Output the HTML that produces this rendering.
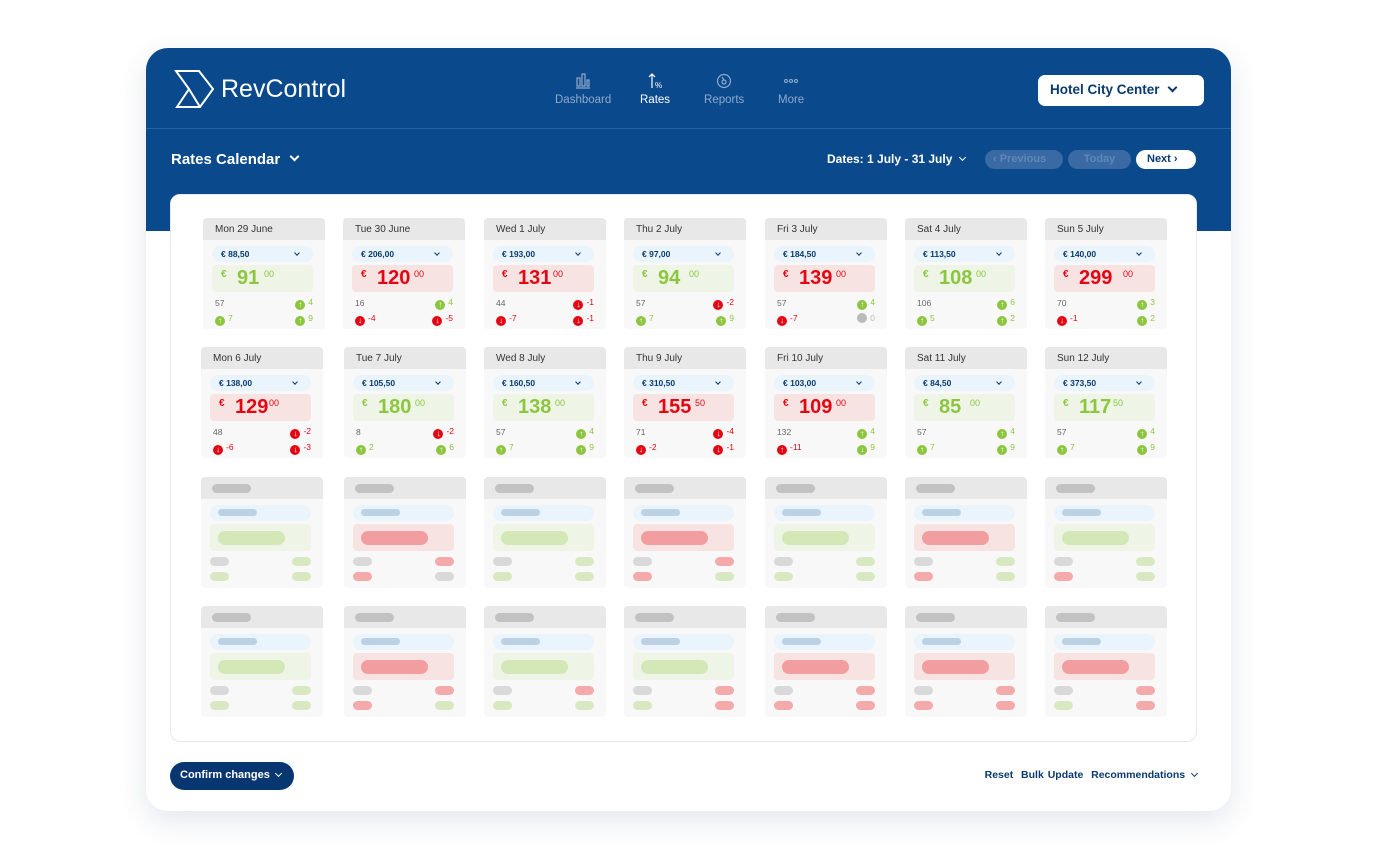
<!DOCTYPE html>
<html><head><meta charset="utf-8"><style>
*{box-sizing:border-box;margin:0;padding:0}
body{width:1376px;height:861px;background:#fff;font-family:"Liberation Sans",sans-serif;position:relative;overflow:hidden}
.frame{position:absolute;left:146px;top:48px;width:1085px;height:763px;border-radius:22px;background:#fff;box-shadow:0 10px 30px rgba(30,50,90,.12);overflow:hidden}
.blue{position:absolute;left:0;top:0;width:100%;height:183px;background:#0a4a8c}
.divl{position:absolute;left:0;top:80px;width:100%;height:1px;background:#2a62a0}
.panel{position:absolute;left:24px;top:146px;width:1027px;height:548px;background:#fff;border-radius:10px;border:1px solid #e6e8ec}
.nav{position:absolute;top:24px;text-align:center;color:#8fa9cc;font-size:11.5px}
.nav.act{color:#fff}
.nav svg{display:block;margin:0 auto 5px}
.card{position:absolute;width:122px;height:111px;background:#f8f8f8;border-radius:4px;overflow:hidden}
.hd{height:22px;background:#e8e8e8;font-size:10px;color:#333;padding:6px 0 0 12px}
.dd{position:absolute;left:9px;top:28px;width:101px;height:16px;border-radius:8px;background:#eaf4fc;font-size:8.5px;color:#0a3a6e;padding:3px 0 0 9px;font-weight:bold}
.dd:after{content:"";position:absolute;right:14px;top:5px;width:3px;height:3px;border-right:1.3px solid #0a3a6e;border-bottom:1.3px solid #0a3a6e;transform:rotate(45deg)}
.pr{position:absolute;left:9px;top:47px;width:101px;height:27px;border-radius:4px;font-weight:bold}
.pg{background:#eef5e6;color:#8cc63f}.prr{background:#f8e3e3;color:#e30613}
.pr .e{position:absolute;left:9px;top:4px;font-size:10px}
.pr .n{position:absolute;left:25px;top:2px;font-size:20px}
.pr .c{position:absolute;top:4px;font-size:9px;font-weight:normal}
.s{position:absolute;font-size:8.5px;white-space:nowrap}
.s i{display:inline-block;width:10px;height:10px;border-radius:50%;color:#fff;font-style:normal;font-size:8px;text-align:center;line-height:10px;margin-right:3px;vertical-align:-2px;font-weight:bold}
.g{color:#8cc63f}.g i{background:#8cc63f}
.r{color:#e30613}.r i{background:#e30613}
.n0{color:#bbb}.n0 i{background:#bbb}
.l1{left:12px;top:80px;color:#666}.r1{right:12px;top:79px}.l2{left:12px;top:95px}.r2{right:12px;top:95px}
.ph .hb{position:absolute;left:11px;top:7px;width:39px;height:9px;border-radius:5px;background:#c2c2c2}
.ph .db{position:absolute;left:9px;top:28px;width:101px;height:16px;border-radius:8px;background:#eaf4fc}
.ph .db:after{content:"";position:absolute;left:8px;top:4px;width:39px;height:7px;border-radius:4px;background:#bcd2e4}
.ph .pb{position:absolute;left:9px;top:47px;width:101px;height:27px;border-radius:4px}
.ph .pb:after{content:"";position:absolute;left:8px;top:7px;width:67px;height:14px;border-radius:7px}
.ph .pg:after{background:#d4e7b7}.ph .prr:after{background:#f29ea0}
.ph b{position:absolute;width:19px;height:9px;border-radius:5px}
.b1{left:9px;top:80px}.b2{right:12px;top:80px}.b3{left:9px;top:95px}.b4{right:12px;top:95px}
.gy{background:#d9d9d9}.gr{background:#d8e9c2}.rd{background:#f4a9aa}
.chev{display:inline-block;width:7px;height:7px;border-right:2px solid;border-bottom:2px solid;transform:rotate(45deg)}
</style></head><body>
<div class="frame">
<div class="blue"></div>
<div class="divl"></div>
<svg style="position:absolute;left:28px;top:21px" width="42" height="40" viewBox="0 0 42 40" fill="none" stroke="#fff" stroke-width="2" stroke-linejoin="miter"><path d="M2 2H25L39 20L26 38H3L15 20Z"/><path d="M15 20L26 38"/></svg>
<div style="position:absolute;left:75px;top:27px;color:#fff;font-size:25px">RevControl</div>
<div class="nav" style="left:409px"><svg width="16" height="17" viewBox="0 0 16 17" fill="none" stroke="#8fa9cc" stroke-width="1.2"><rect x="2" y="6" width="3" height="8"/><rect x="7" y="2" width="3" height="12"/><rect x="12" y="8" width="2" height="6"/><path d="M1 16h14"/></svg>Dashboard</div>
<div class="nav act" style="left:494px"><svg width="16" height="17" viewBox="0 0 16 17" fill="none" stroke="#fff" stroke-width="1.2"><path d="M5 16V2M2 5l3-3 3 3"/><text x="8" y="16" font-size="8" fill="#fff" stroke="none">%</text></svg>Rates</div>
<div class="nav" style="left:558px"><svg width="16" height="17" viewBox="0 0 16 17" fill="none" stroke="#8fa9cc" stroke-width="1.2"><circle cx="8" cy="9" r="6.5"/><circle cx="8" cy="10" r="2"/><path d="M6 5l2 3"/></svg>Reports</div>
<div class="nav" style="left:632px"><svg width="16" height="17" viewBox="0 0 16 17" fill="none" stroke="#8fa9cc" stroke-width="1.1"><circle cx="3" cy="9" r="1.5"/><circle cx="8" cy="9" r="1.5"/><circle cx="13" cy="9" r="1.5"/></svg>More</div>
<div style="position:absolute;left:892px;top:27px;width:166px;height:31px;background:#fff;border-radius:7px;color:#0a3a6e;font-weight:bold;font-size:13.5px;padding:7px 0 0 12px">Hotel City Center <span class="chev" style="margin-left:6px;vertical-align:3px;color:#0a3a6e"></span></div>
<div style="position:absolute;left:25px;top:103px;color:#fff;font-size:15px;font-weight:bold">Rates Calendar <span class="chev" style="margin-left:7px;vertical-align:4px;color:#fff"></span></div>
<div style="position:absolute;left:681px;top:104px;color:#fff;font-size:12px;font-weight:bold">Dates: 1 July - 31 July <span class="chev" style="width:5px;height:5px;border-width:1.5px;margin-left:4px;vertical-align:3px"></span></div>
<div style="position:absolute;left:839px;top:102px;width:78px;height:19px;border-radius:10px;background:#3a6aa4;color:#5f87b8;font-size:11px;font-weight:bold;padding:3px 0 0 8px">‹ Previous</div>
<div style="position:absolute;left:922px;top:102px;width:63px;height:19px;border-radius:10px;background:#3a6aa4;color:#5f87b8;font-size:11px;font-weight:bold;text-align:center;padding-top:3px">Today</div>
<div style="position:absolute;left:990px;top:102px;width:60px;height:19px;border-radius:10px;background:#fff;color:#0a3a6e;font-size:11px;font-weight:bold;padding:3px 0 0 11px">Next ›</div>
<div class="panel"></div>
<div style="position:absolute;left:24px;top:714px;width:124px;height:28px;border-radius:14px;background:#073670;color:#fff;font-size:11px;font-weight:bold;padding:7px 0 0 10px">Confirm changes <span class="chev" style="width:5px;height:5px;border-width:1.5px;margin-left:3px;vertical-align:2px"></span></div>
<div style="position:absolute;right:34px;top:721px;color:#0a3a6e;font-size:10.5px;font-weight:bold;word-spacing:1px">Reset&nbsp; Bulk Update&nbsp; Recommendations <span class="chev" style="width:5px;height:5px;border-width:1.5px;margin-left:3px;vertical-align:2px"></span></div>
</div>

<!-- row 1 -->
<div class="card" style="left:203px;top:218px"><div class="hd">Mon 29 June</div><div class="dd">€ 88,50</div><div class="pr pg"><span class="e">€</span><span class="n">91</span><span class="c" style="left:52px">00</span></div><span class="s l1">57</span><span class="s g r1"><i>↑</i>4</span><span class="s g l2"><i>↑</i>7</span><span class="s g r2"><i>↑</i>9</span></div>
<div class="card" style="left:343px;top:218px"><div class="hd">Tue 30 June</div><div class="dd">€ 206,00</div><div class="pr prr"><span class="e">€</span><span class="n">120</span><span class="c" style="left:62px">00</span></div><span class="s l1">16</span><span class="s g r1"><i>↑</i>4</span><span class="s r l2"><i>↓</i>-4</span><span class="s r r2"><i>↓</i>-5</span></div>
<div class="card" style="left:484px;top:218px"><div class="hd">Wed 1 July</div><div class="dd">€ 193,00</div><div class="pr prr"><span class="e">€</span><span class="n">131</span><span class="c" style="left:60px">00</span></div><span class="s l1">44</span><span class="s r r1"><i>↓</i>-1</span><span class="s r l2"><i>↓</i>-7</span><span class="s r r2"><i>↓</i>-1</span></div>
<div class="card" style="left:624px;top:218px"><div class="hd">Thu 2 July</div><div class="dd">€ 97,00</div><div class="pr pg"><span class="e">€</span><span class="n">94</span><span class="c" style="left:56px">00</span></div><span class="s l1">57</span><span class="s r r1"><i>↓</i>-2</span><span class="s g l2"><i>↑</i>7</span><span class="s g r2"><i>↑</i>9</span></div>
<div class="card" style="left:765px;top:218px"><div class="hd">Fri 3 July</div><div class="dd">€ 184,50</div><div class="pr prr"><span class="e">€</span><span class="n">139</span><span class="c" style="left:62px">00</span></div><span class="s l1">57</span><span class="s g r1"><i>↑</i>4</span><span class="s r l2"><i>↓</i>-7</span><span class="s n0 r2"><i></i>0</span></div>
<div class="card" style="left:905px;top:218px"><div class="hd">Sat 4 July</div><div class="dd">€ 113,50</div><div class="pr pg"><span class="e">€</span><span class="n">108</span><span class="c" style="left:62px">00</span></div><span class="s l1">106</span><span class="s g r1"><i>↑</i>6</span><span class="s g l2"><i>↑</i>5</span><span class="s g r2"><i>↑</i>2</span></div>
<div class="card" style="left:1045px;top:218px"><div class="hd">Sun 5 July</div><div class="dd">€ 140,00</div><div class="pr prr"><span class="e">€</span><span class="n">299</span><span class="c" style="left:69px">00</span></div><span class="s l1">70</span><span class="s g r1"><i>↑</i>3</span><span class="s r l2"><i>↓</i>-1</span><span class="s g r2"><i>↑</i>2</span></div>
<!-- row 2 -->
<div class="card" style="left:201px;top:347px"><div class="hd">Mon 6 July</div><div class="dd">€ 138,00</div><div class="pr prr"><span class="e">€</span><span class="n">129</span><span class="c" style="left:59px">00</span></div><span class="s l1">48</span><span class="s r r1"><i>↓</i>-2</span><span class="s r l2"><i>↓</i>-6</span><span class="s r r2"><i>↓</i>-3</span></div>
<div class="card" style="left:344px;top:347px"><div class="hd">Tue 7 July</div><div class="dd">€ 105,50</div><div class="pr pg"><span class="e">€</span><span class="n">180</span><span class="c" style="left:62px">00</span></div><span class="s l1">8</span><span class="s r r1"><i>↓</i>-2</span><span class="s g l2"><i>↑</i>2</span><span class="s g r2"><i>↑</i>6</span></div>
<div class="card" style="left:484px;top:347px"><div class="hd">Wed 8 July</div><div class="dd">€ 160,50</div><div class="pr pg"><span class="e">€</span><span class="n">138</span><span class="c" style="left:62px">00</span></div><span class="s l1">57</span><span class="s g r1"><i>↑</i>4</span><span class="s g l2"><i>↑</i>7</span><span class="s g r2"><i>↑</i>9</span></div>
<div class="card" style="left:624px;top:347px"><div class="hd">Thu 9 July</div><div class="dd">€ 310,50</div><div class="pr prr"><span class="e">€</span><span class="n">155</span><span class="c" style="left:62px">50</span></div><span class="s l1">71</span><span class="s r r1"><i>↓</i>-4</span><span class="s r l2"><i>↓</i>-2</span><span class="s r r2"><i>↓</i>-1</span></div>
<div class="card" style="left:765px;top:347px"><div class="hd">Fri 10 July</div><div class="dd">€ 103,00</div><div class="pr prr"><span class="e">€</span><span class="n">109</span><span class="c" style="left:62px">00</span></div><span class="s l1">132</span><span class="s g r1"><i>↑</i>4</span><span class="s r l2"><i>↑</i>-11</span><span class="s g r2"><i>↓</i>9</span></div>
<div class="card" style="left:905px;top:347px"><div class="hd">Sat 11 July</div><div class="dd">€ 84,50</div><div class="pr pg"><span class="e">€</span><span class="n">85</span><span class="c" style="left:56px">00</span></div><span class="s l1">57</span><span class="s g r1"><i>↑</i>4</span><span class="s g l2"><i>↑</i>7</span><span class="s g r2"><i>↑</i>9</span></div>
<div class="card" style="left:1045px;top:347px"><div class="hd">Sun 12 July</div><div class="dd">€ 373,50</div><div class="pr pg"><span class="e">€</span><span class="n">117</span><span class="c" style="left:59px">50</span></div><span class="s l1">57</span><span class="s g r1"><i>↑</i>4</span><span class="s g l2"><i>↑</i>7</span><span class="s g r2"><i>↑</i>9</span></div>
<!-- row 3 placeholders -->
<div class="card ph" style="left:201px;top:477px"><div class="hd"></div><span class="hb"></span><div class="db"></div><div class="pb pg"></div><b class="b1 gy"></b><b class="b2 gr"></b><b class="b3 gr"></b><b class="b4 gr"></b></div>
<div class="card ph" style="left:344px;top:477px"><div class="hd"></div><span class="hb"></span><div class="db"></div><div class="pb prr"></div><b class="b1 gy"></b><b class="b2 rd"></b><b class="b3 rd"></b><b class="b4 gy"></b></div>
<div class="card ph" style="left:484px;top:477px"><div class="hd"></div><span class="hb"></span><div class="db"></div><div class="pb pg"></div><b class="b1 gy"></b><b class="b2 gr"></b><b class="b3 gr"></b><b class="b4 gr"></b></div>
<div class="card ph" style="left:624px;top:477px"><div class="hd"></div><span class="hb"></span><div class="db"></div><div class="pb prr"></div><b class="b1 gy"></b><b class="b2 rd"></b><b class="b3 rd"></b><b class="b4 gr"></b></div>
<div class="card ph" style="left:765px;top:477px"><div class="hd"></div><span class="hb"></span><div class="db"></div><div class="pb pg"></div><b class="b1 gy"></b><b class="b2 gr"></b><b class="b3 gr"></b><b class="b4 gr"></b></div>
<div class="card ph" style="left:905px;top:477px"><div class="hd"></div><span class="hb"></span><div class="db"></div><div class="pb prr"></div><b class="b1 gy"></b><b class="b2 gr"></b><b class="b3 rd"></b><b class="b4 gr"></b></div>
<div class="card ph" style="left:1045px;top:477px"><div class="hd"></div><span class="hb"></span><div class="db"></div><div class="pb pg"></div><b class="b1 gy"></b><b class="b2 gr"></b><b class="b3 rd"></b><b class="b4 gr"></b></div>
<!-- row 4 placeholders -->
<div class="card ph" style="left:201px;top:606px"><div class="hd"></div><span class="hb"></span><div class="db"></div><div class="pb pg"></div><b class="b1 gy"></b><b class="b2 gr"></b><b class="b3 gr"></b><b class="b4 gr"></b></div>
<div class="card ph" style="left:344px;top:606px"><div class="hd"></div><span class="hb"></span><div class="db"></div><div class="pb prr"></div><b class="b1 gy"></b><b class="b2 rd"></b><b class="b3 rd"></b><b class="b4 gr"></b></div>
<div class="card ph" style="left:484px;top:606px"><div class="hd"></div><span class="hb"></span><div class="db"></div><div class="pb pg"></div><b class="b1 gy"></b><b class="b2 rd"></b><b class="b3 gr"></b><b class="b4 gr"></b></div>
<div class="card ph" style="left:624px;top:606px"><div class="hd"></div><span class="hb"></span><div class="db"></div><div class="pb pg"></div><b class="b1 gy"></b><b class="b2 rd"></b><b class="b3 gr"></b><b class="b4 rd"></b></div>
<div class="card ph" style="left:765px;top:606px"><div class="hd"></div><span class="hb"></span><div class="db"></div><div class="pb prr"></div><b class="b1 gy"></b><b class="b2 rd"></b><b class="b3 rd"></b><b class="b4 rd"></b></div>
<div class="card ph" style="left:905px;top:606px"><div class="hd"></div><span class="hb"></span><div class="db"></div><div class="pb prr"></div><b class="b1 gy"></b><b class="b2 rd"></b><b class="b3 rd"></b><b class="b4 rd"></b></div>
<div class="card ph" style="left:1045px;top:606px"><div class="hd"></div><span class="hb"></span><div class="db"></div><div class="pb prr"></div><b class="b1 gy"></b><b class="b2 rd"></b><b class="b3 gr"></b><b class="b4 rd"></b></div>
</body></html>
